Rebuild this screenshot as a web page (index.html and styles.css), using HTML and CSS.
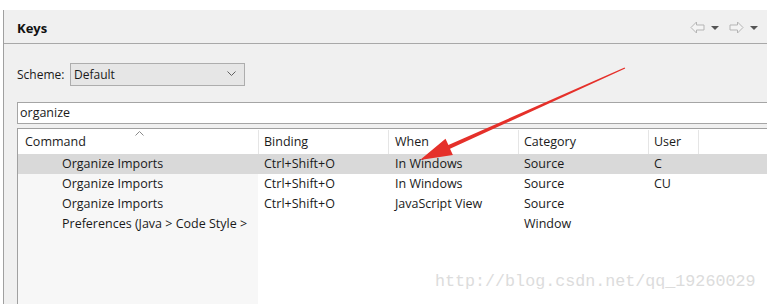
FILE: index.html
```html
<!DOCTYPE html>
<html>
<head>
<meta charset="utf-8">
<link rel="stylesheet" href="styles.css">
</head>
<body>
<div class="window">
  <div class="titlebar">
    <span class="title">Keys</span>
    <div class="nav">
      <svg width="15" height="13" viewBox="0 0 15 13"><path d="M1 6.5 L6.5 1 L6.5 4 L14 4 L14 9 L6.5 9 L6.5 12 Z" fill="#f4f4f4" stroke="#b5b5b5"/></svg>
      <span class="drop"></span>
      <svg width="15" height="13" viewBox="0 0 15 13"><path d="M14 6.5 L8.5 1 L8.5 4 L1 4 L1 9 L8.5 9 L8.5 12 Z" fill="#f4f4f4" stroke="#b5b5b5"/></svg>
      <span class="drop"></span>
    </div>
  </div>
  <div class="content">
    <div class="scheme">
      <span class="label">Scheme:</span>
      <div class="select"><span>Default</span>
        <svg width="9" height="6" viewBox="0 0 9 6"><path d="M0.5 0.5 L4.5 4.5 L8.5 0.5" fill="none" stroke="#606060"/></svg>
      </div>
    </div>
    <div class="filter">organize</div>
    <div class="table">
      <div class="row head">
        <div class="c c1">Command<svg class="caret" width="9" height="5" viewBox="0 0 9 5"><path d="M0.5 4.5 L4.5 0.5 L8.5 4.5" fill="none" stroke="#8a8a8a"/></svg></div>
        <div class="c c2">Binding</div>
        <div class="c c3">When</div>
        <div class="c c4">Category</div>
        <div class="c c5">User</div>
        <div class="c c6"></div>
      </div>
      <div class="row sel">
        <div class="c c1 cmd">Organize Imports</div>
        <div class="c c2">Ctrl+Shift+O</div>
        <div class="c c3">In Windows</div>
        <div class="c c4">Source</div>
        <div class="c c5">C</div>
        <div class="c c6"></div>
      </div>
      <div class="row">
        <div class="c c1 cmd">Organize Imports</div>
        <div class="c c2">Ctrl+Shift+O</div>
        <div class="c c3">In Windows</div>
        <div class="c c4">Source</div>
        <div class="c c5">CU</div>
        <div class="c c6"></div>
      </div>
      <div class="row">
        <div class="c c1 cmd">Organize Imports</div>
        <div class="c c2">Ctrl+Shift+O</div>
        <div class="c c3">JavaScript View</div>
        <div class="c c4">Source</div>
        <div class="c c5"></div>
        <div class="c c6"></div>
      </div>
      <div class="row">
        <div class="c c1 cmd">Preferences (Java &gt; Code Style &gt;</div>
        <div class="c c2"></div>
        <div class="c c3"></div>
        <div class="c c4">Window</div>
        <div class="c c5"></div>
        <div class="c c6"></div>
      </div>
      <div class="row filler">
        <div class="c c1"></div>
        <div class="c rest"></div>
      </div>
    </div>
  </div>
</div>
<svg class="arrow" width="767" height="304" viewBox="0 0 767 304">
  <polygon points="420,160 452.9,155.1 450,148.7 625.2,68.6 624.6,67.4 448.4,145.1 445.5,138.7" fill="#e5302a"/>
</svg>
<div class="watermark">http://blog.csdn.net/qq_19260029</div>
</body>
</html>
```
FILE: styles.css
```css
html, body {
  margin: 0;
  padding: 0;
  background: #ffffff;
  width: 767px;
  height: 304px;
  overflow: hidden;
  font-family: "Open Sans", "Noto Sans", sans-serif;
  font-size: 12px;
  color: #1a1a1a;
}
.window {
  position: relative;
  margin: 10px 0 0 3px;
  height: 294px;
  border-left: 1px solid #a0a0a0;
  background: #f0f0f0;
  display: flex;
  flex-direction: column;
}
.titlebar {
  height: 34px;
  border-bottom: 1px solid #a8a8a8;
  display: flex;
  align-items: center;
  justify-content: space-between;
  padding-left: 13px;
  box-sizing: border-box;
}
.title {
  font-weight: bold;
  font-size: 13px;
  color: #111;
  margin-top: 3px;
}
.nav {
  display: flex;
  align-items: center;
  gap: 6px;
  margin-right: 5px;
  margin-top: 2px;
}
.drop {
  width: 0;
  height: 0;
  border-left: 4px solid transparent;
  border-right: 4px solid transparent;
  border-top: 4px solid #555;
  margin-right: 4px;
}
.content {
  padding-left: 13px;
  flex: 1;
  display: flex;
  flex-direction: column;
}
.scheme {
  display: flex;
  align-items: center;
  margin-top: 18px;
  height: 24px;
}
.label {
  width: 53px;
}
.select {
  width: 175px;
  height: 23px;
  box-sizing: border-box;
  border: 1px solid #adadad;
  background: #e6e6e6;
  display: flex;
  align-items: center;
  justify-content: space-between;
  padding: 0 8px 0 3px;
}
.filter {
  margin-top: 16px;
  height: 22px;
  box-sizing: border-box;
  border: 1px solid #a5a5a5;
  border-right: none;
  background: #fff;
  padding-left: 2px;
  line-height: 19px;
  font-size: 12.5px;
}
.table {
  margin-top: 4px;
  flex: 1;
  border-top: 1px solid #a0a0a0;
  border-left: 1px solid #a0a0a0;
  background: #fff;
  display: flex;
  flex-direction: column;
}
.row {
  display: flex;
  height: 20px;
  line-height: 20px;
  font-size: 12.5px;
}
.row.head {
  height: 25px;
  line-height: 24px;
  padding-top: 1px;
  box-sizing: border-box;
}
.c {
  box-sizing: border-box;
  padding-left: 6px;
  white-space: nowrap;
  overflow: hidden;
}
.c1 { width: 240px; position: relative; background: #f7f7f7; }
.head .c1 { background: #fff; padding-left: 7px; overflow: visible; }
.c2 { width: 130px; }
.c3 { width: 130px; padding-left: 7px; }
.c4 { width: 130px; }
.c5 { width: 50px; }
.c6 { flex: 1; }
.head .c2, .head .c3, .head .c4, .head .c5, .head .c6 {
  border-left: 1px solid #e5e5e5;
}
.head .c2 { padding-left: 5px; }
.head .c3 { padding-left: 6px; }
.head .c4 { padding-left: 5px; }
.head .c5 { padding-left: 5px; }
.caret {
  position: absolute;
  left: 117px;
  top: 1px;
}
.cmd { padding-left: 44px; }
.row.sel .c { background: #d9d9d9; }
.row.filler {
  flex: 1;
}
.filler .c1 { height: 100%; }
.rest { flex: 1; background: #fff; }
.arrow {
  position: absolute;
  left: 0;
  top: 0;
}
.watermark {
  position: absolute;
  left: 435px;
  top: 272px;
  font-family: "Liberation Mono", monospace;
  font-size: 16.7px;
  color: #dcdcdc;
  letter-spacing: 0;
}
```
